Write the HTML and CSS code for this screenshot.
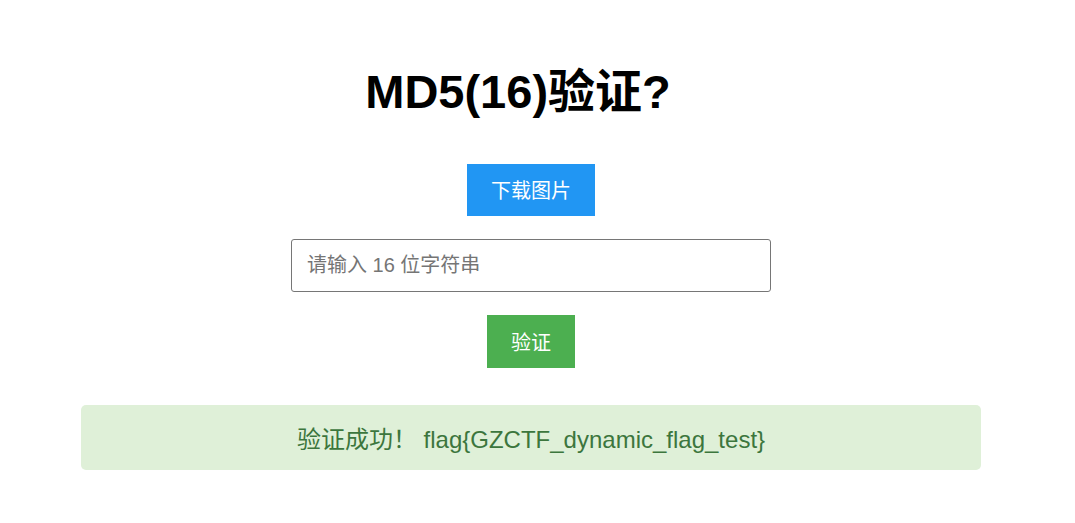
FILE: index.html
```html
<!DOCTYPE html>
<html lang="zh">
<head>
<meta charset="utf-8">
<title>MD5(16)验证?</title>
<link rel="stylesheet" href="styles.css">
</head>
<body>
<main class="page">
  <h1 class="title">MD5(16)验证?</h1>
  <button class="btn btn-blue" type="button">下载图片</button>
  <input class="code-input" type="text" placeholder="请输入 16 位字符串">
  <button class="btn btn-green" type="button">验证</button>
  <div class="alert">验证成功！ flag{GZCTF_dynamic_flag_test}</div>
</main>
</body>
</html>
```

FILE: styles.css
```css
html, body {
  margin: 0;
  padding: 0;
  background: #ffffff;
}

body {
  font-family: "Liberation Sans", Arial, "Noto Sans CJK SC", sans-serif;
}

.page {
  display: flex;
  flex-direction: column;
  align-items: center;
  padding: 0 13px 0 0;
}

.title {
  margin: 64px 26px 0 0;
  font-size: 47px;
  line-height: 56px;
  font-weight: bold;
  color: #000;
}

.btn {
  border: none;
  color: #fff;
  font-family: "Liberation Sans", Arial, "Noto Sans CJK SC", sans-serif;
  font-size: 20px;
  line-height: 22px;
  cursor: pointer;
}

.btn-blue {
  margin-top: 44px;
  height: 52px;
  width: 128px;
  padding: 2px 0 0 0;
  background: #2196f3;
}

.btn-green {
  margin-top: 23px;
  height: 53px;
  width: 88px;
  padding: 2px 0 0 0;
  background: #4caf50;
}

.code-input {
  margin-top: 23px;
  box-sizing: border-box;
  width: 480px;
  height: 53px;
  padding: 0 15px;
  border: 1px solid #767676;
  border-radius: 3px;
  font-family: "Liberation Sans", Arial, "Noto Sans CJK SC", sans-serif;
  font-size: 20px;
  color: #000;
}

.code-input::placeholder {
  color: #757575;
}

.alert {
  margin-top: 37px;
  box-sizing: border-box;
  width: 900px;
  height: 65px;
  display: flex;
  align-items: center;
  justify-content: center;
  background: #dff0d8;
  color: #3c763d;
  border-radius: 5px;
  font-size: 24px;
}
```
